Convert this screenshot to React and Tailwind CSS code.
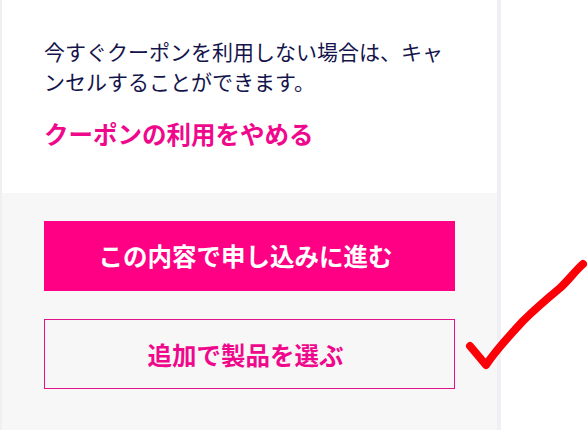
import React from "react";

const App = () => {
  return (
    <div className="relative h-[430px] w-[587px] overflow-hidden bg-white font-['Noto_Sans_CJK_JP','Noto_Sans',sans-serif]">
      <div className="h-full w-[501px] border-r-4 border-l-2 border-[#f0f0f4]">
        {/* Coupon cancel */}
        <div className="h-[193px] bg-white px-[42px] pt-[36px]">
          <p className="text-[21px] leading-[30px] text-[#14144b]">
            今すぐクーポンを利用しない場合は、キャンセルすることができます。
          </p>
          <a className="mt-[22px] block text-[24.5px] leading-[32px] font-bold text-[#f0088c]">
            クーポンの利用をやめる
          </a>
        </div>

        {/* Actions */}
        <div className="flex h-[237px] flex-col gap-[28px] bg-[#f7f7f8] px-[42px] pt-[28px]">
          <button className="h-[70px] w-[411px] bg-[#ff0084] pt-[1px] pr-[8px] text-[24.5px] font-bold text-white">
            この内容で申し込みに進む
          </button>
          <button className="h-[70px] w-[411px] border border-[#e0128c] pt-[2px] pr-[8px] text-[24.5px] font-bold text-[#f0088c]">
            追加で製品を選ぶ
          </button>
        </div>
      </div>

      {/* hand drawn check mark */}
      <svg className="absolute top-0 left-0" width="587" height="430" fill="none">
        <path
          d="M470 346 L486 365 C 494 353 508 337 523 321 C 535 309 548 298 560 288 C 568 281 575 271 583 264"
          stroke="#fb0007"
          strokeWidth="8"
          strokeLinecap="round"
          strokeLinejoin="round"
        />
      </svg>
    </div>
  );
};

export default App;
